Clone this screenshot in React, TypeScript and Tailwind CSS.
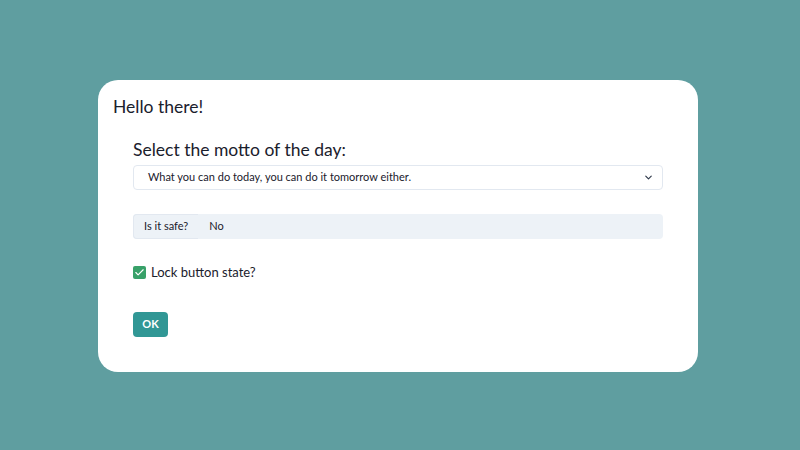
import React, { useState } from 'react';
import { ChevronDown, Check } from 'lucide-react';

export default function App() {
  const [locked, setLocked] = useState(true);

  return (
    <div className="w-[800px] h-[450px] bg-[#5f9ea0] pt-[80px] pl-[98px] text-[#1a202c]" style={{ fontFamily: 'Lato, "Liberation Sans", sans-serif' }}>
      <div className="w-[600px] h-[292px] bg-white rounded-[20px] pt-[16px] px-[15px]">
        <h1 className="text-[17.5px] leading-[22px]">Hello there!</h1>

        <div className="pl-[20px] pr-[20px] mt-[20px]">
          <label className="block text-[17.5px] leading-[24px] mb-[3px]">Select the motto of the day:</label>
          <div className="h-[25px] w-full border border-[#e2e8f0] rounded-[4px] flex items-center justify-between pl-[14px] pr-[8px] text-[11px]">
            <span>What you can do today, you can do it tomorrow either.</span>
            <ChevronDown size={11} strokeWidth={2.5} className="text-[#2d3748]" />
          </div>

          <div className="mt-[24px] h-[25px] w-full flex rounded-[4px] bg-[#edf2f7] text-[11px]">
            <div className="px-[10px] flex items-center border border-r-0 border-[#e2e8f0] rounded-l-[4px]">Is it safe?</div>
            <div className="pl-[11px] flex items-center">No</div>
          </div>

          <label className="mt-[24px] flex items-center gap-[5px] text-[13px] leading-[18px] cursor-pointer" onClick={() => setLocked(!locked)}>
            <span className={`w-[13px] h-[13px] rounded-[2px] flex items-center justify-center ${locked ? 'bg-[#38a169]' : 'border border-[#cbd5e0]'}`}>
              {locked && <Check size={11} strokeWidth={2.5} className="text-white" />}
            </span>
            Lock button state?
          </label>

          <button className="block mt-[31px] h-[25px] w-[35px] bg-[#319795] rounded-[4px] text-white text-[11px] font-bold">OK</button>
        </div>
      </div>
    </div>
  );
}
